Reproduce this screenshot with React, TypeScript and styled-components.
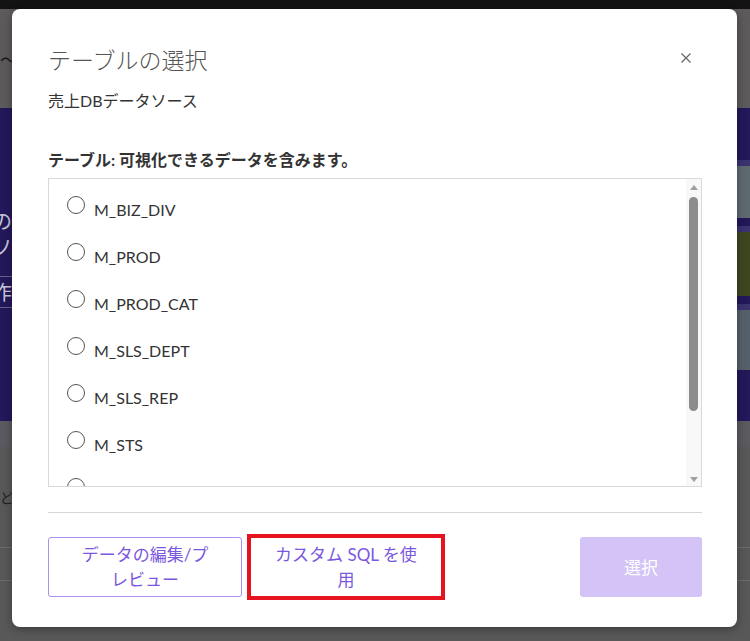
import styled, { createGlobalStyle } from 'styled-components';

const GlobalStyle = createGlobalStyle`
  html, body {
    margin: 0;
    padding: 0;
    background: #575757;
  }
  * {
    box-sizing: border-box;
  }
`;

const FONT = `"Lato", "Noto Sans CJK JP", "Noto Sans", sans-serif`;

// ---- background page (dimmed by the dialog overlay) ----
const Page = styled.div`
  position: relative;
  width: 750px;
  height: 641px;
  overflow: hidden;
  display: flex;
  flex-direction: column;
  background: #585858;
  font-family: ${FONT};
`;

const TopBar = styled.div`
  height: 9px;
  background: #131313;
`;

const HeaderArea = styled.div`
  height: 99px;
  background: #5c5a5b;
  display: flex;
  align-items: center;
  color: #1a1a1a;
  font-size: 18px;
`;

const PurpleBand = styled.div`
  height: 313px;
  background: #22185a;
  display: flex;
  justify-content: space-between;
`;

const LeftStub = styled.div`
  width: 20px;
  display: flex;
  flex-direction: column;
  padding-top: 100px;
  color: #c9c6d8;
  font-size: 20px;
  line-height: 26px;
  margin-left: -8px;
`;

const StubBox = styled.div`
  margin-top: 16px;
  border-top: 1px solid #6a6488;
  border-bottom: 1px solid #6a6488;
  height: 32px;
  line-height: 30px;
`;

const RightStub = styled.div`
  width: 20px;
  display: flex;
  flex-direction: column;
  gap: 8px;
  padding-top: 52px;
`;

const Tile = styled.div<{ $bg: string; $h: number }>`
  height: ${(p) => p.$h}px;
  background: ${(p) => p.$bg};
  border-top: 6px solid #3b3270;
`;

const LowerArea = styled.div`
  flex: 1;
  display: flex;
  flex-direction: column;
`;

const LowerStrip = styled.div`
  height: 26px;
  background: #5b5a61;
`;

const LowerLine = styled.div<{ $mt: number }>`
  margin-top: ${(p) => p.$mt}px;
  height: 1px;
  background: #6c6c6c;
`;

const FaintText = styled.div`
  margin-top: 40px;
  color: #222;
  font-size: 14px;
`;

// ---- dialog ----
const Modal = styled.div`
  position: absolute;
  top: 9px;
  left: 12px;
  width: 725px;
  height: 618px;
  background: #fff;
  border-radius: 8px;
  box-shadow: 0 2px 8px rgba(0, 0, 0, 0.35);
  padding: 35px 35px 26px 36px;
  display: flex;
  flex-direction: column;

  & > * {
    flex-shrink: 0;
  }
`;

const Header = styled.div`
  display: flex;
  justify-content: space-between;
  align-items: center;
  height: 30px;
`;

const Title = styled.h2`
  margin: 0;
  font-family: "Noto Sans CJK JP", sans-serif;
  font-weight: 300;
  font-size: 23px;
  color: #555;
  line-height: 30px;
`;

const CloseButton = styled.button`
  border: none;
  background: none;
  padding: 0;
  margin-right: 10px;
  margin-top: -2px;
  width: 12px;
  height: 12px;
  display: flex;
  cursor: pointer;
`;

const Subtitle = styled.div`
  margin-top: 15px;
  font-size: 16px;
  line-height: 24px;
  color: #333;
`;

const Label = styled.div`
  margin-top: 35px;
  font-size: 16px;
  font-weight: 700;
  line-height: 24px;
  color: #333;
`;

const ListBox = styled.div`
  margin-top: 6px;
  height: 309px;
  border: 1px solid #d9d9d9;
  display: flex;
`;

const ListBody = styled.div`
  flex: 1;
  overflow: hidden;
  padding: 7px 0 0 18px;
`;

const Row = styled.label`
  height: 47px;
  display: flex;
  align-items: center;
  gap: 9px;
  font-size: 16px;
  color: #333;
`;

const Radio = styled.span`
  width: 18px;
  height: 18px;
  border-radius: 50%;
  border: 1.2px solid #555;
  background: #fff;
  margin-bottom: 9px;
  flex-shrink: 0;
`;

const ScrollTrack = styled.div`
  width: 15px;
  background: #f8f8f8;
  display: flex;
  flex-direction: column;
  align-items: center;
  padding: 6px 0 4px;
`;

const Arrow = styled.div<{ $down?: boolean }>`
  width: 0;
  height: 0;
  border-left: 4px solid transparent;
  border-right: 4px solid transparent;
  ${(p) =>
    p.$down
      ? 'border-top: 5px solid #a0a0a0;'
      : 'border-bottom: 5px solid #a0a0a0;'}
`;

const Thumb = styled.div`
  margin-top: 7px;
  width: 9px;
  height: 214px;
  border-radius: 5px;
  background: #8c8c8c;
`;

const TrackFill = styled.div`
  flex: 1;
`;

const Divider = styled.div`
  margin-top: 25px;
  height: 1px;
  background: #d6d6d6;
`;

const Footer = styled.div`
  margin-top: 20px;
  display: flex;
  align-items: center;
  height: 68px;
`;

const Button = styled.button<{ $variant: 'outline' | 'plain' | 'primary'; $w: number; $pad: number }>`
  width: ${(p) => p.$w}px;
  height: ${(p) => (p.$variant === 'plain' ? 58 : 60)}px;
  padding: 0 ${(p) => p.$pad}px;
  font-family: ${FONT};
  font-size: 17px;
  line-height: 25px;
  text-align: center;
  border-radius: 3px;
  cursor: pointer;
  color: ${(p) => (p.$variant === 'primary' ? '#fff' : '#7a58de')};
  background: ${(p) => (p.$variant === 'primary' ? '#d4c3f6' : '#fff')};
  border: 1px solid ${(p) => (p.$variant === 'outline' ? '#a88ff0' : 'transparent')};
`;

const Highlight = styled.div`
  margin-left: 5px;
  border: 4px solid #e5141f;
  display: flex;
`;

const Spacer = styled.div`
  flex: 1;
`;

const tables = ['M_BIZ_DIV', 'M_PROD', 'M_PROD_CAT', 'M_SLS_DEPT', 'M_SLS_REP', 'M_STS', 'M_TERR', 'T_SLS'];

function App() {
  return (
    <>
      <GlobalStyle />
      <Page>
        <TopBar />
        <HeaderArea>〜</HeaderArea>
        <PurpleBand>
          <LeftStub>
            <div>の</div>
            <div>ソ</div>
            <StubBox>作</StubBox>
          </LeftStub>
          <RightStub>
            <Tile $bg="#5f6a70" $h={58} />
            <Tile $bg="#3e4620" $h={70} />
            <Tile $bg="#56606a" $h={66} />
          </RightStub>
        </PurpleBand>
        <LowerArea>
          <LowerStrip />
          <FaintText>ど.</FaintText>
          <LowerLine $mt={40} />
          <LowerLine $mt={32} />
        </LowerArea>

        <Modal role="dialog">
          <Header>
            <Title>テーブルの選択</Title>
            <CloseButton aria-label="閉じる">
              <svg width="12" height="12" viewBox="0 0 12 12">
                <path d="M1.5 1.5 L10.5 10.5 M10.5 1.5 L1.5 10.5" stroke="#666" strokeWidth="1.2" />
              </svg>
            </CloseButton>
          </Header>
          <Subtitle>売上DBデータソース</Subtitle>
          <Label>テーブル: 可視化できるデータを含みます。</Label>
          <ListBox>
            <ListBody>
              {tables.map((t) => (
                <Row key={t}>
                  <Radio />
                  {t}
                </Row>
              ))}
            </ListBody>
            <ScrollTrack>
              <Arrow />
              <Thumb />
              <TrackFill />
              <Arrow $down />
            </ScrollTrack>
          </ListBox>
          <Divider />
          <Footer>
            <Button $variant="outline" $w={194} $pad={32}>
              データの編集/プレビュー
            </Button>
            <Highlight>
              <Button $variant="plain" $w={190} $pad={20}>
                カスタム SQL を使用
              </Button>
            </Highlight>
            <Spacer />
            <Button $variant="primary" $w={122} $pad={10}>
              選択
            </Button>
          </Footer>
        </Modal>
      </Page>
    </>
  );
}

export default App;
